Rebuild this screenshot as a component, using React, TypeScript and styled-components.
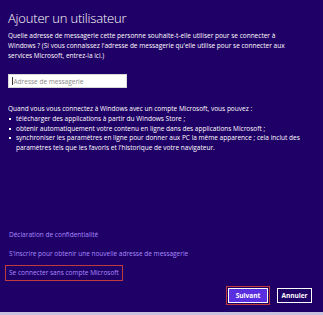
import React from 'react';
import styled, { createGlobalStyle } from 'styled-components';

const GlobalStyle = createGlobalStyle`
  html, body {
    margin: 0;
    padding: 0;
    background: #1f0066;
  }
  * {
    box-sizing: border-box;
  }
`;

const Page = styled.div`
  display: flex;
  flex-direction: column;
  width: 323px;
  height: 315px;
  background: #1f0066;
  color: #ffffff;
  font-family: "Open Sans", "Noto Sans", sans-serif;
  border-bottom: 3px solid #c9c2de;
`;

const Content = styled.div`
  flex: 1;
  display: flex;
  flex-direction: column;
  padding: 9px 8px 0 8px;
`;

const Title = styled.h1`
  margin: 0;
  font-size: 13px;
  font-weight: 300;
  line-height: 18px;
  letter-spacing: -0.2px;
`;

const Text = styled.p`
  margin: ${p => p.$top || 0}px 0 0 0;
  font-size: 6.5px;
  line-height: 10px;
  max-width: 280px;
`;

const Input = styled.div`
  margin-top: 13px;
  width: 119px;
  height: 14px;
  background: #ffffff;
  border: 1px solid #d8d8d8;
  display: flex;
  align-items: center;
  padding-left: 3px;
  font-size: 6.5px;
  color: #8a8a8a;
`;

const Caret = styled.span`
  display: inline-block;
  width: 1px;
  height: 8px;
  background: #333;
  margin-right: 0.5px;
`;

const List = styled.ul`
  list-style: none;
  margin: 0;
  padding: 0;
`;

const Item = styled.li`
  position: relative;
  padding-left: 8px;
  font-size: 6.5px;
  line-height: 9.5px;
  &::before {
    content: '';
    position: absolute;
    left: 1px;
    top: 4px;
    width: 2px;
    height: 2px;
    background: #ffffff;
  }
`;

const Links = styled.div`
  margin-top: auto;
  display: flex;
  flex-direction: column;
  align-items: flex-start;
  gap: 9px;
`;

const Link = styled.a`
  color: #a98cff;
  font-size: 6.5px;
  line-height: 10px;
  text-decoration: none;
  padding: 0 1px;
  outline: ${p => (p.$marked ? '1.5px solid #c0393f' : 'none')};
  outline-offset: 2px;
`;

const Footer = styled.div`
  display: flex;
  justify-content: flex-end;
  align-items: center;
  gap: 9px;
  padding: 10px 11px 9px 0;
`;

const Button = styled.button`
  font-family: inherit;
  font-size: 6.5px;
  font-weight: 700;
  color: #ffffff;
  height: 15px;
  padding: 0;
  width: ${p => p.$w}px;
  background: ${p => (p.$primary ? '#5a2fe0' : '#1f0066')};
  border: 1.5px solid #ffffff;
  outline: ${p => (p.$primary ? '1.5px solid #c0393f' : 'none')};
  outline-offset: 1px;
`;

export default function App() {
  return (
    <Page>
      <GlobalStyle />
      <Content>
        <Title>Ajouter un utilisateur</Title>
        <Text $top={4}>
          Quelle adresse de messagerie cette personne souhaite-t-elle utiliser pour se connecter à
          Windows ? (Si vous connaissez l'adresse de messagerie qu'elle utilise pour se connecter aux
          services Microsoft, entrez-la ici.)
        </Text>
        <Input>
          <Caret />
          Adresse de messagerie
        </Input>
        <Text $top={16}>Quand vous vous connectez à Windows avec un compte Microsoft, vous pouvez :</Text>
        <List>
          <Item>télécharger des applications à partir du Windows Store ;</Item>
          <Item>obtenir automatiquement votre contenu en ligne dans des applications Microsoft ;</Item>
          <Item>
            synchroniser les paramètres en ligne pour donner aux PC la même apparence ; cela inclut des
            paramètres tels que les favoris et l'historique de votre navigateur.
          </Item>
        </List>
        <Links>
          <Link>Déclaration de confidentialité</Link>
          <Link>S'inscrire pour obtenir une nouvelle adresse de messagerie</Link>
          <Link $marked>Se connecter sans compte Microsoft</Link>
        </Links>
      </Content>
      <Footer>
        <Button $primary $w={40}>Suivant</Button>
        <Button $w={35}>Annuler</Button>
      </Footer>
    </Page>
  );
}
